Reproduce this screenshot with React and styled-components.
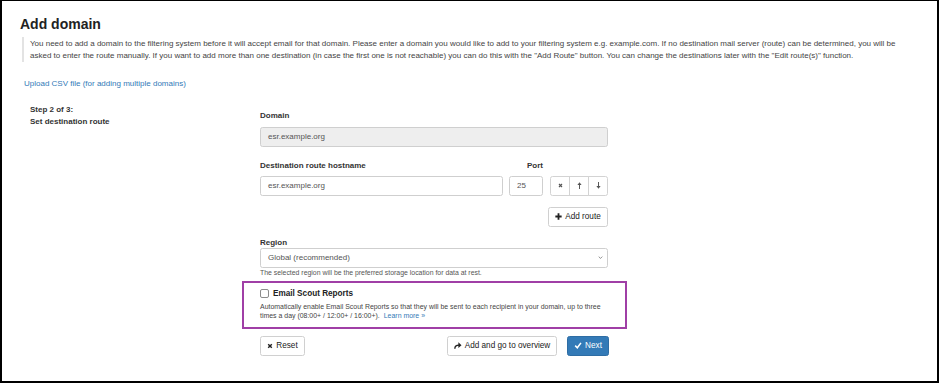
import React from 'react';
import styled, { createGlobalStyle } from 'styled-components';

const GlobalStyle = createGlobalStyle`
  html, body {
    margin: 0;
    padding: 0;
    background: #fff;
  }
  body {
    font-family: "Liberation Sans", Arial, sans-serif;
    color: #333;
  }
`;

const Frame = styled.div`
  box-sizing: border-box;
  width: 939px;
  height: 383px;
  border: 2px solid #000;
  border-top-width: 1px;
  background: #fff;
  overflow: hidden;
`;

const Title = styled.h3`
  margin: 14.5px 0 0 18px;
  font-size: 14px;
  line-height: 16px;
  font-weight: 700;
  color: #222;
`;

const Lead = styled.p`
  margin: 5.5px 20px 0 20px;
  padding: 1px 0 0 6px;
  border-left: 2px solid #e3e3e3;
  font-size: 8px;
  line-height: 12px;
  color: #444;
`;

const UploadLink = styled.a`
  display: block;
  width: max-content;
  margin: 16px 0 0 22px;
  font-size: 8px;
  line-height: 12px;
  color: #337ab7;
  text-decoration: none;
`;

const Row = styled.div`
  display: grid;
  grid-template-columns: 230px 348px;
  margin-top: 14px;
  padding-left: 28px;
`;

const StepText = styled.div`
  font-size: 8px;
  line-height: 12px;
  font-weight: 700;
  color: #333;
`;

const FormCol = styled.div`
  padding-top: 6.5px;
`;

const Label = styled.label`
  display: block;
  font-size: 8px;
  line-height: 10px;
  font-weight: 700;
  color: #333;
  margin-bottom: ${p => p.$gap || 0}px;
  margin-top: ${p => p.$top || 0}px;
  text-align: ${p => (p.$right ? 'right' : 'left')};
`;

const TextBox = styled.div`
  box-sizing: border-box;
  height: 20px;
  display: flex;
  align-items: center;
  padding: 0 7px;
  border: 1px solid #cfcfcf;
  border-radius: 2.5px;
  background: ${p => (p.$disabled ? '#eee' : '#fff')};
  font-size: 8px;
  color: #555;
`;

const RouteRow = styled.div`
  display: flex;
  align-items: flex-end;
  margin-top: 14.3px;
`;

const Col = styled.div`
  width: ${p => p.$w}px;
  margin-right: ${p => p.$mr || 0}px;
`;

const BtnGroup = styled.div`
  display: flex;
  width: 58px;
`;

const IconBtn = styled.div`
  box-sizing: border-box;
  flex: 1;
  height: 20px;
  display: flex;
  align-items: center;
  justify-content: center;
  border: 1px solid #d3d3d3;
  background: #fff;
  color: #555;
  & + & {
    margin-left: -1px;
  }
  &:first-child {
    border-radius: 2.5px 0 0 2.5px;
  }
  &:last-child {
    border-radius: 0 2.5px 2.5px 0;
  }
`;

const RightAlign = styled.div`
  display: flex;
  justify-content: flex-end;
  margin-top: 11px;
`;

const Button = styled.div`
  box-sizing: border-box;
  height: 20px;
  display: inline-flex;
  align-items: center;
  justify-content: center;
  gap: 3px;
  width: ${p => p.$w}px;
  border: 1px solid ${p => (p.$primary ? '#2e6da4' : '#d0d0d0')};
  border-radius: 2.5px;
  background: ${p => (p.$primary ? '#337ab7' : '#fff')};
  color: ${p => (p.$primary ? '#fff' : '#222')};
  font-size: 8.2px;
  white-space: nowrap;
`;

const Select = styled(TextBox)`
  justify-content: space-between;
  padding-right: 4px;
`;

const Help = styled.div`
  margin-top: 0.5px;
  font-size: 6.9px;
  line-height: 9px;
  color: #555;
`;

const Highlight = styled.div`
  margin: 3.5px -19px 0 -18px;
  padding: 5px 17px 6.5px 16px;
  border: 2px solid #a03fa6;
`;

const CheckRow = styled.div`
  display: flex;
  align-items: center;
  gap: 4px;
  height: 12px;
`;

const Checkbox = styled.span`
  box-sizing: border-box;
  width: 9px;
  height: 9px;
  border: 1px solid #8c8c8c;
  border-radius: 2px;
  background: #fff;
`;

const CheckTitle = styled.span`
  font-size: 8.2px;
  font-weight: 700;
  color: #222;
`;

const Desc = styled.div`
  margin-top: 2.5px;
  font-size: 6.95px;
  line-height: 9px;
  color: #444;
`;

const LearnMore = styled.a`
  margin-left: 4px;
  color: #337ab7;
  text-decoration: none;
`;

const Actions = styled.div`
  display: flex;
  justify-content: space-between;
  margin-top: 7px;
  margin-right: -1px;
`;

const ActionGroup = styled.div`
  display: flex;
  gap: 10px;
`;

const Icon = ({ w = 7, h = 7, children, vb = '0 0 10 10' }) => (
  <svg width={w} height={h} viewBox={vb} fill="none">
    {children}
  </svg>
);

const XIcon = ({ size = 6 }) => (
  <Icon w={size} h={size}>
    <path d="M2 2l6 6M8 2l-6 6" stroke="currentColor" strokeWidth="2.4" />
  </Icon>
);

const ArrowIcon = ({ down }) => (
  <Icon w={5} h={7} vb="0 0 7 10">
    <g transform={down ? 'rotate(180 3.5 5)' : undefined}>
      <path d="M3.5 10V3" stroke="currentColor" strokeWidth="1.4" />
      <polygon points="3.5,0.5 0.5,4.2 6.5,4.2" fill="currentColor" />
    </g>
  </Icon>
);

const PlusIcon = () => (
  <Icon w={7} h={7}>
    <path d="M5 0.5v9M0.5 5h9" stroke="currentColor" strokeWidth="2.6" />
  </Icon>
);

const ShareIcon = () => (
  <Icon w={8} h={7} vb="0 0 11 10">
    <path d="M1 9.5C1 6 3 4.5 7 4.5" stroke="currentColor" strokeWidth="2" />
    <polygon points="6,0.5 10.5,4.5 6,8.5" fill="currentColor" />
  </Icon>
);

const CheckIcon = () => (
  <Icon w={8} h={7}>
    <path d="M1 5.2l3 3 5.2-7" stroke="currentColor" strokeWidth="2.2" />
  </Icon>
);

const Chevron = () => (
  <Icon w={5} h={3} vb="0 0 8 5">
    <path d="M1 1l3 3 3-3" stroke="#666" strokeWidth="1.2" />
  </Icon>
);

const App = () => (
  <>
    <GlobalStyle />
    <Frame>
      <Title>Add domain</Title>
      <Lead>
        You need to add a domain to the filtering system before it will accept email for that domain. Please enter a domain you would like to add to your filtering system e.g. example.com. If no destination mail server (route) can be determined, you will be
        <br />
        asked to enter the route manually. If you want to add more than one destination (in case the first one is not reachable) you can do this with the "Add Route" button. You can change the destinations later with the "Edit route(s)" function.
      </Lead>
      <UploadLink href="#">Upload CSV file (for adding multiple domains)</UploadLink>
      <Row>
        <StepText>
          Step 2 of 3:
          <br />
          Set destination route
        </StepText>
        <FormCol>
          <Label $gap={6}>Domain</Label>
          <TextBox $disabled>esr.example.org</TextBox>

          <RouteRow>
            <Col $w={243} $mr={6}>
              <Label $gap={5}>Destination route hostname</Label>
              <TextBox>esr.example.org</TextBox>
            </Col>
            <Col $w={34} $mr={7}>
              <Label $gap={5} $right>Port</Label>
              <TextBox>25</TextBox>
            </Col>
            <BtnGroup>
              <IconBtn><XIcon size={5} /></IconBtn>
              <IconBtn><ArrowIcon /></IconBtn>
              <IconBtn><ArrowIcon down /></IconBtn>
            </BtnGroup>
          </RouteRow>

          <RightAlign>
            <Button $w={60}><PlusIcon />Add route</Button>
          </RightAlign>

          <Label $top={11}>Region</Label>
          <Select>
            <span>Global (recommended)</span>
            <Chevron />
          </Select>
          <Help>The selected region will be the preferred storage location for data at rest.</Help>

          <Highlight>
            <CheckRow>
              <Checkbox />
              <CheckTitle>Email Scout Reports</CheckTitle>
            </CheckRow>
            <Desc>
              Automatically enable Email Scout Reports so that they will be sent to each recipient in your domain, up to three
              <br />
              times a day (08:00+ / 12:00+ / 16:00+).
              <LearnMore href="#">Learn more »</LearnMore>
            </Desc>
          </Highlight>

          <Actions>
            <Button $w={45}><XIcon />Reset</Button>
            <ActionGroup>
              <Button $w={110}><ShareIcon />Add and go to overview</Button>
              <Button $w={42} $primary><CheckIcon />Next</Button>
            </ActionGroup>
          </Actions>
        </FormCol>
      </Row>
    </Frame>
  </>
);

export default App;
